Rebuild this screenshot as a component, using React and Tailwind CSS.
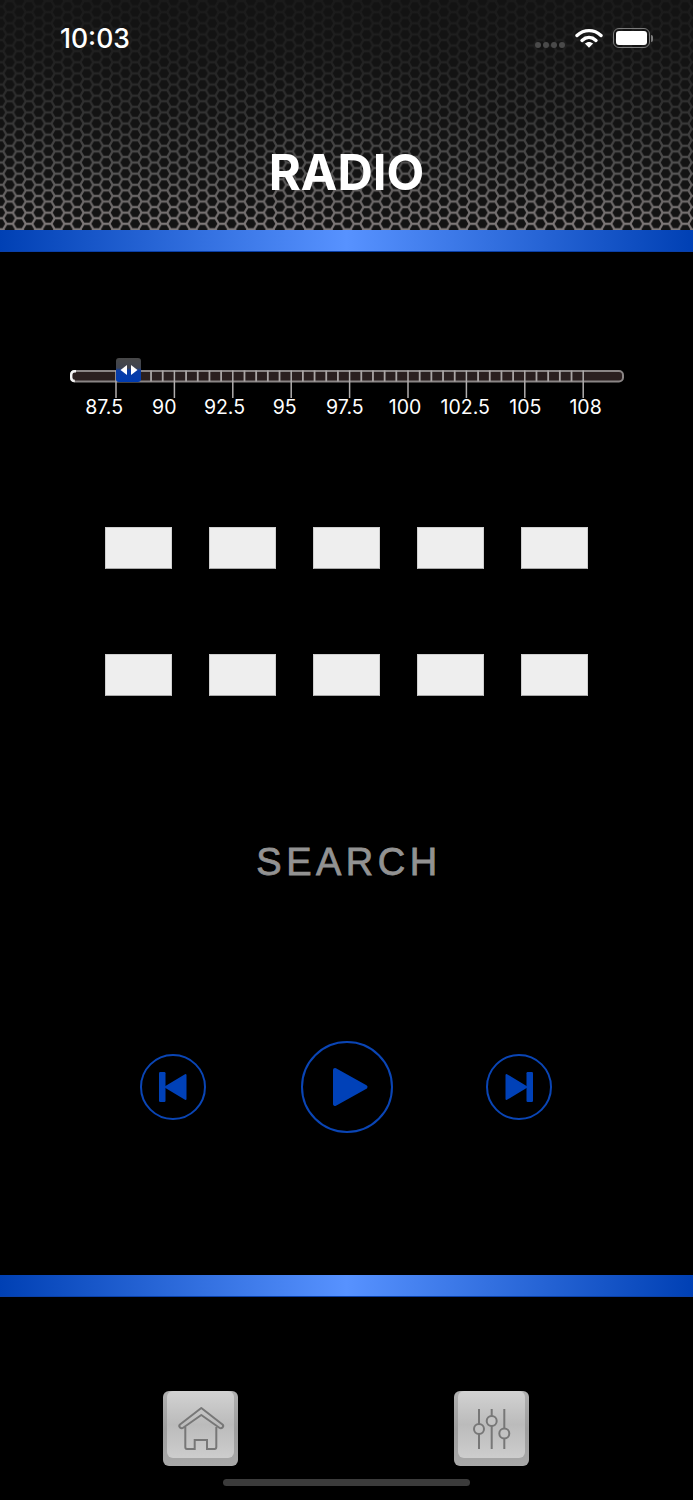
import React from "react";

const LABELS = ["87.5", "90", "92.5", "95", "97.5", "100", "102.5", "105", "108"];

// honeycomb cell drawn at one lattice point
const HEX = "-5.2,0 -2.6,-4.5 2.6,-4.5 5.2,0 2.6,4.5 -2.6,4.5";
const CELLS = [
  [0, 0],
  [19.3, 0],
  [0, 11.14],
  [19.3, 11.14],
  [9.65, 5.57],
];

function Honeycomb() {
  return (
    <svg className="absolute inset-0" width="693" height="230">
      <defs>
        <linearGradient id="wall" x1="0" y1="0" x2="0" y2="1">
          <stop offset="0" stopColor="#1a1a1a" />
          <stop offset="0.25" stopColor="#212121" />
          <stop offset="0.5" stopColor="#333333" />
          <stop offset="0.75" stopColor="#555454" />
          <stop offset="1" stopColor="#827c7c" />
        </linearGradient>
        <pattern id="hex" x="0" y="1" width="19.3" height="11.14" patternUnits="userSpaceOnUse">
          {CELLS.map(([x, y]) => (
            <polygon key={x + "-" + y} points={HEX} transform={`translate(${x} ${y})`} fill="#131313" />
          ))}
        </pattern>
      </defs>
      <rect width="693" height="230" fill="url(#wall)" />
      <rect width="693" height="230" fill="url(#hex)" />
    </svg>
  );
}

function StatusIcons() {
  return (
    <div className="flex items-center">
      <div className="flex gap-[2px] mt-[14px]">
        <span className="w-[6px] h-[6px] rounded-full bg-[#4a4a4a]" />
        <span className="w-[6px] h-[6px] rounded-full bg-[#4a4a4a]" />
        <span className="w-[6px] h-[6px] rounded-full bg-[#4a4a4a]" />
        <span className="w-[6px] h-[6px] rounded-full bg-[#4a4a4a]" />
      </div>
      <svg className="ml-[10px]" width="28" height="20" viewBox="0 0 28 20" fill="none">
        <path d="M2 7.5C9 1 19 1 26 7.5" stroke="#fff" strokeWidth="3.4" strokeLinecap="round" />
        <path d="M7 12.4C11.2 8.6 16.8 8.6 21 12.4" stroke="#fff" strokeWidth="3.4" strokeLinecap="round" />
        <path d="M9.9 15.6C12.4 13.4 15.6 13.4 18.1 15.6L14 19.8Z" fill="#fff" />
      </svg>
      <div className="ml-[10px] flex items-center">
        <div className="w-[37px] h-[20px] rounded-[6px] border-[1.5px] border-[#7c7c7c] p-[2px]">
          <div className="w-full h-full rounded-[3px] bg-white" />
        </div>
        <div className="w-[2px] h-[7px] rounded-r-full bg-[#7c7c7c] ml-[1px]" />
      </div>
    </div>
  );
}

function BlueBar() {
  return (
    <div className="h-[22px] border-b border-[#0a3fa8] bg-[linear-gradient(90deg,#0040b4_0%,#5792ff_50%,#0040b4_100%)]" />
  );
}

function Scale() {
  const ticks = [];
  for (let i = 0; i <= 40; i++) {
    const x = 46 + i * 11.68;
    const major = i % 5 === 0;
    ticks.push(
      <line
        key={i}
        x1={x}
        x2={x}
        y1="0.5"
        y2={major ? 28 : 11.5}
        stroke={major ? "#b0adad" : "#aaa5a5"}
        strokeWidth={major ? 1.5 : 1.8}
      />
    );
  }
  return (
    <svg className="block" width="554" height="28" viewBox="0 0 554 28">
      <rect x="1" y="1" width="552" height="10.5" rx="4" fill="#2a1f1f" stroke="#8a8585" strokeWidth="2" />
      {ticks}
      <path d="M6 1.2H4.8C2.6 1.2 1.2 2.6 1.2 4.8V7.5C1.2 9.7 2.6 11 4.8 11" fill="none" stroke="#f2f2f2" strokeWidth="2.4" />
    </svg>
  );
}

function Tuner() {
  return (
    <div className="relative mt-[106px] ml-[70px] w-[554px] pt-[12px]">
      <Scale />
      <div className="absolute left-[46px] top-0 w-[25px] h-[24px] rounded-[3px] flex items-center justify-center gap-[2px] bg-[linear-gradient(180deg,#484848_0%,#3f4450_42%,#0a3da6_52%,#003bb0_100%)]">
        <svg width="20" height="12" viewBox="0 0 20 12" fill="#fff">
          <path d="M8 1V11L1.5 6Z" />
          <path d="M12 1V11L18.5 6Z" />
        </svg>
      </div>
      <div className="flex ml-[4px] -mt-[2px] font-['Inter',sans-serif] text-[19.5px] leading-[22px] text-white">
        {LABELS.map((l) => (
          <span key={l} className="w-[60.2px] shrink-0 text-center">
            {l}
          </span>
        ))}
      </div>
    </div>
  );
}

function PresetRow() {
  return (
    <div className="flex justify-center gap-[37px]">
      {[0, 1, 2, 3, 4].map((i) => (
        <div key={i} className="w-[67px] h-[42px] bg-[#eeeeee] border border-[#cfcfcf] border-b-[#a9a9a9]" />
      ))}
    </div>
  );
}

function PrevIcon() {
  return (
    <svg width="66" height="66" viewBox="0 0 66 66" fill="#0041b8">
      <circle cx="33" cy="33" r="32" fill="none" stroke="#0a45b5" strokeWidth="2" />
      <rect x="19" y="18" width="6.5" height="30" rx="1.2" />
      <path d="M25.5 33L45.5 21V45Z" stroke="#0041b8" strokeWidth="2" strokeLinejoin="round" />
    </svg>
  );
}

function NextIcon() {
  return (
    <svg width="66" height="66" viewBox="0 0 66 66" fill="#0041b8">
      <circle cx="33" cy="33" r="32" fill="none" stroke="#0a45b5" strokeWidth="2" />
      <rect x="40.5" y="18" width="6.5" height="30" rx="1.2" />
      <path d="M40.5 33L20.5 21V45Z" stroke="#0041b8" strokeWidth="2" strokeLinejoin="round" />
    </svg>
  );
}

function PlayIcon() {
  return (
    <svg width="92" height="92" viewBox="0 0 92 92" fill="#0041b8">
      <circle cx="46" cy="46" r="45" fill="none" stroke="#0a45b5" strokeWidth="2" />
      <path d="M34 29L64.5 46L34 63Z" stroke="#0041b8" strokeWidth="4" strokeLinejoin="round" />
    </svg>
  );
}

function SquareButton({ children }) {
  return (
    <div className="w-[75px] h-[75px] rounded-[6px] p-[4px] bg-[linear-gradient(180deg,#b0b0b0,#9e9e9e_50%,#a8a8a8)]">
      <div className="w-full h-full rounded-[6px] bg-[linear-gradient(180deg,#d2d2d2,#bbbbbb_50%,#cdcdcd)]">
        <svg className="block -m-[4px]" width="75" height="75" viewBox="0 0 75 75" fill="none" stroke="#777777" strokeWidth="2">
          {children}
        </svg>
      </div>
    </div>
  );
}

export default function App() {
  return (
    <div className="relative w-[693px] h-[1500px] overflow-hidden bg-black">
      {/* header */}
      <div className="relative h-[230px]">
        <Honeycomb />
        <div className="relative flex justify-between pt-[28px] pl-[60px] pr-[40px]">
          <span className="font-['Inter',sans-serif] font-medium text-[26.5px] leading-[20px] text-white">10:03</span>
          <StatusIcons />
        </div>
        <h1 className="relative mt-[99px] text-center font-['Inter',sans-serif] font-bold text-[49px] leading-[52px] text-white">
          RADIO
        </h1>
      </div>
      <BlueBar />

      <Tuner />

      {/* preset slots */}
      <div className="mt-[109px] flex flex-col gap-[85px]">
        <PresetRow />
        <PresetRow />
      </div>

      <div className="mt-[146px] pl-[5px] text-center font-['Liberation_Sans',sans-serif] text-[38px] leading-[40px] tracking-[4.5px] text-[#929292] [-webkit-text-stroke:0.8px_#929292]">
        SEARCH
      </div>

      {/* transport */}
      <div className="mt-[159px] flex items-center pl-[140px]">
        <PrevIcon />
        <div className="ml-[95px]">
          <PlayIcon />
        </div>
        <div className="ml-[93px]">
          <NextIcon />
        </div>
      </div>

      <div className="mt-[142px]">
        <BlueBar />
      </div>

      {/* bottom buttons */}
      <div className="mt-[94px] pl-[163px] flex gap-[216px]">
        <SquareButton>
          <path d="M38.3 17L59.5 33.5Q61 35 59.5 36.5Q58 38 56 36.5L38.3 24L20.5 36.5Q18.5 38 17 36.5Q15.5 35 17 33.5Z" strokeLinejoin="round" />
          <path d="M22.3 36V56Q22.3 58 24 58H31.7V49H44V58H51.5Q53.3 58 53.3 56V36" />
        </SquareButton>
        <SquareButton>
          <path d="M25 18V58M37.7 18V58M50.3 18V58" />
          <circle cx="25" cy="38" r="5" fill="#c2c2c2" />
          <circle cx="37.7" cy="30" r="5" fill="#c4c4c4" />
          <circle cx="50.3" cy="42.5" r="5" fill="#c2c2c2" />
        </SquareButton>
      </div>

      {/* home indicator */}
      <div className="absolute left-[223px] top-[1479px] w-[247px] h-[7px] rounded-full bg-[#3b3b3b]" />
    </div>
  );
}
